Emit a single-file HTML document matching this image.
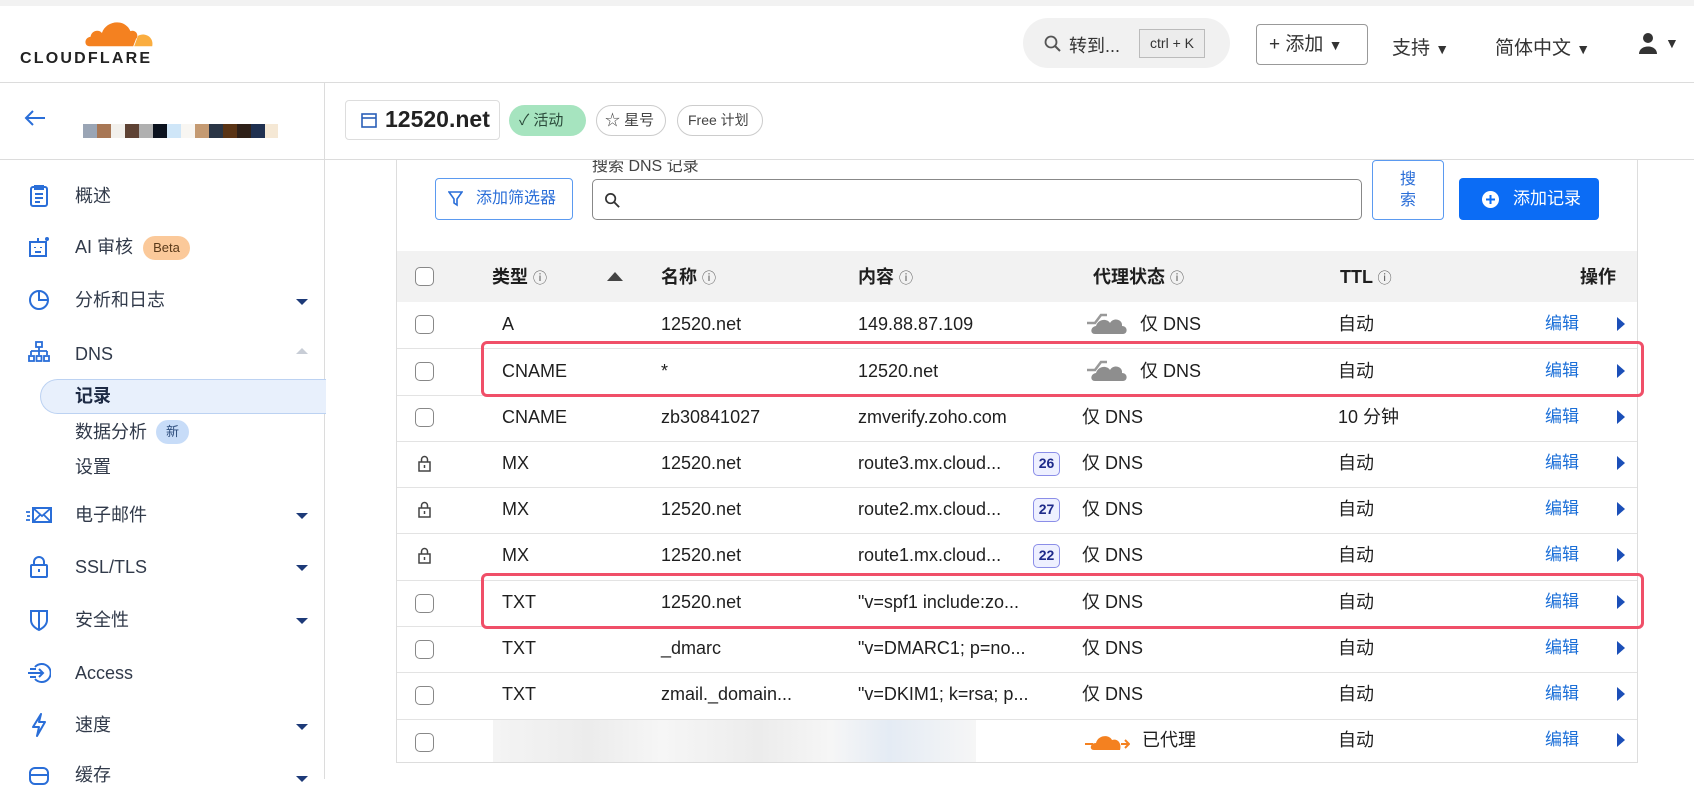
<!DOCTYPE html>
<html><head><meta charset="utf-8"><style>
*{box-sizing:border-box;margin:0;padding:0}
body{width:1694px;height:779px;overflow:hidden;background:#fff;font-family:"Liberation Sans","Noto Sans CJK SC",sans-serif;color:#222;position:relative}
.a{position:absolute;white-space:nowrap}
.t{font-size:18px;color:#1f1f1f;line-height:26px}
.nav{font-size:18px;color:#313a4a;line-height:26px}
.ic{position:absolute;left:27px;width:24px;height:24px}
.car{position:absolute;left:296px;width:0;height:0;border-left:6px solid transparent;border-right:6px solid transparent;border-top:6px solid #1d3a78}
.cb{position:absolute;left:415px;width:19px;height:19px;border:1.5px solid #888;border-radius:5px;background:#fff}
.row{position:absolute;left:397px;width:1240px;height:1px;background:#e3e3e3}
.edit{position:absolute;left:1545px;font-size:17px;color:#1b6fd8;line-height:26px}
.edit:after{content:"";position:absolute;left:72px;top:6px;border-top:7px solid transparent;border-bottom:7px solid transparent;border-left:8px solid #1b4fb8}
.badge{position:absolute;width:27px;height:24px;border:1.5px solid #8b8ee8;border-radius:5px;background:#eef0ff;color:#1e2a8a;font-size:14px;font-weight:bold;text-align:center;line-height:21px}
.red{position:absolute;left:481px;width:1163px;height:56px;border:3px solid #f04f68;border-radius:6px}
.inf{font-size:14px;color:#555;font-weight:normal}
</style></head><body>
<div class="a" style="left:0;top:0;width:1694px;height:6px;background:#f2f2f2"></div>
<div class="a" style="left:0;top:82px;width:1694px;height:1px;background:#dcdcdc"></div>
<!-- logo -->
<svg class="a" style="left:82px;top:17px" width="74" height="32" viewBox="0 0 78 32"><path d="M8 30 C2 30 2 21 9 20 C10 13 18 12 21 16 C25 3 45 0 51 14 C58 12 60 20 57 22 L54 30 Z" fill="#f48120"/><path d="M55 30 L59 19 C66 15 76 20 74 30 Z" fill="#faad3f"/></svg>
<div class="a" style="left:20px;top:50px;font-size:16px;font-weight:bold;letter-spacing:2.2px;color:#222">CLOUDFLARE</div>
<!-- search pill -->
<div class="a" style="left:1023px;top:18px;width:207px;height:50px;border-radius:25px;background:#f1f1f1"></div>
<svg class="a" style="left:1044px;top:35px" width="18" height="18" viewBox="0 0 18 18"><circle cx="7" cy="7" r="5.5" stroke="#555" stroke-width="1.8" fill="none"/><path d="M11 11 L16 16" stroke="#555" stroke-width="2"/></svg>
<div class="a" style="left:1069px;top:32px;font-size:18px;color:#333">转到...</div>
<div class="a" style="left:1139px;top:29px;width:66px;height:29px;border:1px solid #bbb;background:#ececec;font-size:14px;color:#333;text-align:center;line-height:27px">ctrl + K</div>
<div class="a" style="left:1256px;top:24px;width:112px;height:41px;border:1px solid #999;border-radius:4px;font-size:19px;color:#333;line-height:39px;padding-left:12px">+ 添加 <span style="font-size:14px">▼</span></div>
<div class="a" style="left:1392px;top:33px;font-size:19px;color:#333">支持 <span style="font-size:14px">▼</span></div>
<div class="a" style="left:1495px;top:33px;font-size:19px;color:#333">简体中文 <span style="font-size:14px">▼</span></div>
<svg class="a" style="left:1638px;top:32px" width="20" height="22" viewBox="0 0 20 22"><circle cx="10" cy="6" r="5" fill="#333"/><path d="M1 22 C1 12 19 12 19 22Z" fill="#333"/></svg>
<div class="a" style="left:1665px;top:35px;font-size:14px;color:#333">▼</div>
<!-- second row -->
<div class="a" style="left:324px;top:82px;width:1px;height:697px;background:#dcdcdc"></div>
<div class="a" style="left:0;top:159px;width:1694px;height:1px;background:#dcdcdc"></div>
<svg class="a" style="left:24px;top:109px" width="22" height="18" viewBox="0 0 22 18"><path d="M21 9 H2 M9 2 L2 9 L9 16" stroke="#2a6ed8" stroke-width="2" fill="none"/></svg>
<div class="a" style="left:83px;top:124px;height:14px;display:flex">
<i style="width:14px;background:#9aa5b5"></i><i style="width:14px;background:#a87755"></i><i style="width:14px;background:#f2f0ec"></i><i style="width:14px;background:#5e4234"></i><i style="width:14px;background:#b0b0b0"></i><i style="width:14px;background:#0b121e"></i><i style="width:14px;background:#cfe6f8"></i><i style="width:14px;background:#f8f6f2"></i><i style="width:14px;background:#c49a72"></i><i style="width:14px;background:#2a3545"></i><i style="width:14px;background:#5a3415"></i><i style="width:14px;background:#2e2018"></i><i style="width:14px;background:#1f3050"></i><i style="width:13px;background:#f5e8d5"></i></div>
<div class="a" style="left:345px;top:100px;width:155px;height:40px;border:1px solid #ddd;border-radius:4px"></div>
<svg class="a" style="left:361px;top:113px" width="16" height="15" viewBox="0 0 16 15"><rect x="1" y="1" width="14" height="13" fill="none" stroke="#2a5fb8" stroke-width="1.6"/><path d="M1 5 H15" stroke="#2a5fb8" stroke-width="1.6"/></svg>
<div class="a" style="left:385px;top:106px;font-size:23px;font-weight:bold;color:#222">12520.net</div>
<div class="a" style="left:509px;top:105px;width:77px;height:31px;border-radius:16px;background:#a6e4bf;font-size:15px;color:#2a4a3a;line-height:31px;padding-left:10px">✓ 活动</div>
<div class="a" style="left:596px;top:105px;width:70px;height:31px;border-radius:16px;border:1px solid #ccc;font-size:15px;color:#444;line-height:29px;padding-left:8px">☆ 星号</div>
<div class="a" style="left:677px;top:105px;width:86px;height:31px;border-radius:16px;border:1px solid #ccc;font-size:14px;color:#444;line-height:29px;padding-left:10px">Free 计划</div>
<!-- sidebar -->
<svg class="ic" style="top:184px" viewBox="0 0 24 24"><rect x="4" y="3" width="16" height="19" rx="2" fill="none" stroke="#2a6ed8" stroke-width="2"/><path d="M8 2 H16 V5 H8Z M8 10 H16 M8 14 H16 M8 18 H13" stroke="#2a6ed8" stroke-width="2" fill="none"/></svg>
<div class="a nav" style="left:75px;top:183px">概述</div>
<svg class="ic" style="top:235px" viewBox="0 0 24 24"><rect x="3" y="7" width="16" height="14" fill="none" stroke="#2a6ed8" stroke-width="2"/><path d="M11 7 V3 M8 12 V13 M14 12 V13 M8 17 H14" stroke="#2a6ed8" stroke-width="2"/><circle cx="20" cy="4" r="2" fill="#2a6ed8"/></svg>
<div class="a nav" style="left:75px;top:234px">AI 审核</div>
<div class="a" style="left:143px;top:236px;width:47px;height:24px;border-radius:12px;background:#fbc99a;font-size:13px;color:#5a3a1a;text-align:center;line-height:24px">Beta</div>
<svg class="ic" style="top:288px" viewBox="0 0 24 24"><circle cx="12" cy="12" r="9" fill="none" stroke="#2a6ed8" stroke-width="2"/><path d="M12 3 V12 H21" stroke="#2a6ed8" stroke-width="2" fill="none"/></svg>
<div class="a nav" style="left:75px;top:287px">分析和日志</div><div class="car" style="top:299px"></div>
<svg class="ic" style="top:340px" viewBox="0 0 24 24"><rect x="9" y="2" width="6" height="5" fill="none" stroke="#2a6ed8" stroke-width="1.8"/><path d="M12 7 V11 M4 11 H20 M4 11 V15 M12 11 V15 M20 11 V15" stroke="#2a6ed8" stroke-width="1.8" fill="none"/><rect x="2" y="16" width="5" height="5" fill="none" stroke="#2a6ed8" stroke-width="1.8"/><rect x="9.5" y="16" width="5" height="5" fill="none" stroke="#2a6ed8" stroke-width="1.8"/><rect x="17" y="16" width="5" height="5" fill="none" stroke="#2a6ed8" stroke-width="1.8"/></svg>
<div class="a nav" style="left:75px;top:341px">DNS</div>
<div class="a" style="left:296px;top:348px;border-left:6px solid transparent;border-right:6px solid transparent;border-bottom:6px solid #c8cdd6"></div>
<div class="a" style="left:40px;top:379px;width:286px;height:35px;border-radius:18px 0 0 18px;background:#e8f0fc;border:1px solid #bcd2f2;border-right:none"></div>
<div class="a" style="left:75px;top:383px;font-size:18px;font-weight:bold;color:#1d2a44;line-height:26px">记录</div>
<div class="a nav" style="left:75px;top:419px">数据分析</div>
<div class="a" style="left:156px;top:420px;width:33px;height:24px;border-radius:12px;background:#c7dcf8;font-size:13px;color:#2a4a7a;text-align:center;line-height:24px">新</div>
<div class="a nav" style="left:75px;top:454px">设置</div>
<svg class="ic" style="top:503px;left:25px;width:28px" viewBox="0 0 28 24"><rect x="8" y="5" width="18" height="14" fill="none" stroke="#2a6ed8" stroke-width="2"/><path d="M8 5 L17 13 L26 5 M8 19 L15 12 M26 19 L19 12 M1 9 H5 M2 13 H5 M1 17 H5" stroke="#2a6ed8" stroke-width="1.8" fill="none"/></svg>
<div class="a nav" style="left:75px;top:502px">电子邮件</div><div class="car" style="top:513px"></div>
<svg class="ic" style="top:555px" viewBox="0 0 24 24"><rect x="4" y="10" width="16" height="12" rx="1" fill="none" stroke="#2a6ed8" stroke-width="2"/><path d="M7 10 V7 A5 5 0 0 1 17 7 V10 M12 14 V17" stroke="#2a6ed8" stroke-width="2" fill="none"/></svg>
<div class="a nav" style="left:75px;top:554px">SSL/TLS</div><div class="car" style="top:565px"></div>
<svg class="ic" style="top:608px" viewBox="0 0 24 24"><path d="M4 3 H20 V12 C20 17 16 20 12 22 C8 20 4 17 4 12 Z M12 3 V22" stroke="#2a6ed8" stroke-width="2" fill="none"/></svg>
<div class="a nav" style="left:75px;top:607px">安全性</div><div class="car" style="top:618px"></div>
<svg class="ic" style="top:661px" viewBox="0 0 24 24"><path d="M8 6 A9 9 0 1 1 8 18" stroke="#2a6ed8" stroke-width="2" fill="none"/><path d="M1 12 H16 M12 8 L16 12 L12 16 M3 8 H9 M3 16 H9" stroke="#2a6ed8" stroke-width="2" fill="none"/></svg>
<div class="a nav" style="left:75px;top:660px">Access</div>
<svg class="ic" style="top:713px" viewBox="0 0 24 24"><path d="M14 1 L6 14 H12 L10 23 L18 9 H12 Z" stroke="#2a6ed8" stroke-width="2" fill="none" stroke-linejoin="round"/></svg>
<div class="a nav" style="left:75px;top:712px">速度</div><div class="car" style="top:724px"></div>
<svg class="ic" style="top:765px" viewBox="0 0 24 24"><rect x="3" y="3" width="18" height="16" rx="5" fill="none" stroke="#2a6ed8" stroke-width="2"/><path d="M3 10 H21" stroke="#2a6ed8" stroke-width="2"/></svg>
<div class="a nav" style="left:75px;top:762px">缓存</div><div class="car" style="top:776px"></div>
<!-- main card -->
<div class="a" style="left:396px;top:160px;width:1px;height:603px;background:#ddd"></div>
<div class="a" style="left:1637px;top:160px;width:1px;height:603px;background:#ddd"></div>
<div class="a" style="left:396px;top:762px;width:1242px;height:1px;background:#ddd"></div>
<div class="a" style="left:592px;top:152px;font-size:16px;color:#444;clip-path:inset(8px 0 0 0)">搜索 DNS 记录</div>
<div class="a" style="left:435px;top:178px;width:138px;height:42px;border:1.5px solid #5b9af0;border-radius:4px;font-size:16px;color:#2a6ed8;line-height:39px;padding-left:40px">添加筛选器</div>
<svg class="a" style="left:448px;top:191px" width="15" height="16" viewBox="0 0 15 16"><path d="M1 1 H14 L9 8 V14 L6 12 V8 Z" stroke="#2a6ed8" stroke-width="1.6" fill="none"/></svg>
<div class="a" style="left:592px;top:179px;width:770px;height:41px;border:1.5px solid #888;border-radius:5px"></div>
<svg class="a" style="left:604px;top:192px" width="17" height="17" viewBox="0 0 18 18"><circle cx="7" cy="7" r="5" stroke="#333" stroke-width="1.8" fill="none"/><path d="M11 11 L16 16" stroke="#333" stroke-width="2"/></svg>
<div class="a" style="left:1372px;top:160px;width:72px;height:60px;border:1.5px solid #5b9af0;border-radius:4px;font-size:16px;color:#2a6ed8;text-align:center;line-height:21px;padding-top:8px;white-space:normal">搜<br>索</div>
<div class="a" style="left:1459px;top:178px;width:140px;height:42px;border-radius:4px;background:#0b6cf5;font-size:17px;color:#fff;line-height:42px;padding-left:54px">添加记录</div>
<svg class="a" style="left:1482px;top:191px" width="17" height="17" viewBox="0 0 17 17"><circle cx="8.5" cy="8.5" r="8.5" fill="#fff"/><path d="M8.5 4 V13 M4 8.5 H13" stroke="#0b6cf5" stroke-width="2"/></svg>
<!-- table header -->
<div class="a" style="left:397px;top:251px;width:1240px;height:51px;background:#f2f2f2"></div>
<div class="cb" style="top:267px"></div>
<div class="a t" style="left:492px;top:264px;font-weight:bold">类型 <span class="inf">ⓘ</span></div>
<div class="a" style="left:607px;top:272px;border-left:8px solid transparent;border-right:8px solid transparent;border-bottom:9px solid #444"></div>
<div class="a t" style="left:661px;top:264px;font-weight:bold">名称 <span class="inf">ⓘ</span></div>
<div class="a t" style="left:858px;top:264px;font-weight:bold">内容 <span class="inf">ⓘ</span></div>
<div class="a t" style="left:1093px;top:264px;font-weight:bold">代理状态 <span class="inf">ⓘ</span></div>
<div class="a t" style="left:1340px;top:264px;font-weight:bold">TTL <span class="inf">ⓘ</span></div>
<div class="a t" style="left:1580px;top:264px;font-weight:bold">操作</div>
<!-- rows -->
<div class="row" style="top:348px"></div><div class="row" style="top:395px"></div><div class="row" style="top:441px"></div><div class="row" style="top:487px"></div><div class="row" style="top:533px"></div><div class="row" style="top:580px"></div><div class="row" style="top:626px"></div><div class="row" style="top:672px"></div><div class="row" style="top:719px"></div>
<!-- row1 -->
<div class="cb" style="top:315px"></div>
<div class="a t" style="left:502px;top:311px">A</div><div class="a t" style="left:661px;top:311px">12520.net</div><div class="a t" style="left:858px;top:311px">149.88.87.109</div>
<svg class="a" style="left:1087px;top:310px" width="42" height="26" viewBox="0 0 42 26"><path d="M0 13 H8 L14 5 H20" stroke="#999" stroke-width="2.5" fill="none"/><path d="M8 24 C3 24 3 17 9 16 C11 9 20 8 23 13 C26 7 36 9 35 16 C41 16 41 24 36 24Z" fill="#8e8e8e"/></svg>
<div class="a t" style="left:1140px;top:311px">仅 DNS</div><div class="a t" style="left:1338px;top:311px">自动</div><div class="edit" style="top:311px">编辑</div>
<!-- row2 -->
<div class="cb" style="top:362px"></div>
<div class="a t" style="left:502px;top:358px">CNAME</div><div class="a t" style="left:661px;top:358px">*</div><div class="a t" style="left:858px;top:358px">12520.net</div>
<svg class="a" style="left:1087px;top:357px" width="42" height="26" viewBox="0 0 42 26"><path d="M0 13 H8 L14 5 H20" stroke="#999" stroke-width="2.5" fill="none"/><path d="M8 24 C3 24 3 17 9 16 C11 9 20 8 23 13 C26 7 36 9 35 16 C41 16 41 24 36 24Z" fill="#8e8e8e"/></svg>
<div class="a t" style="left:1140px;top:358px">仅 DNS</div><div class="a t" style="left:1338px;top:358px">自动</div><div class="edit" style="top:358px">编辑</div>
<!-- row3 -->
<div class="cb" style="top:408px"></div>
<div class="a t" style="left:502px;top:404px">CNAME</div><div class="a t" style="left:661px;top:404px">zb30841027</div><div class="a t" style="left:858px;top:404px">zmverify.zoho.com</div>
<div class="a t" style="left:1082px;top:404px">仅 DNS</div><div class="a t" style="left:1338px;top:404px">10 分钟</div><div class="edit" style="top:404px">编辑</div>
<!-- MX -->
<svg class="a" style="left:418px;top:455px" width="13" height="17" viewBox="0 0 13 17"><rect x="1" y="7" width="11" height="9" fill="none" stroke="#444" stroke-width="1.5"/><path d="M3.5 7 V4.5 A3 3 0 0 1 9.5 4.5 V7 M6.5 10 V13" stroke="#444" stroke-width="1.5" fill="none"/></svg>
<div class="a t" style="left:502px;top:450px">MX</div><div class="a t" style="left:661px;top:450px">12520.net</div><div class="a t" style="left:858px;top:450px">route3.mx.cloud...</div><div class="badge" style="left:1033px;top:452px">26</div>
<div class="a t" style="left:1082px;top:450px">仅 DNS</div><div class="a t" style="left:1338px;top:450px">自动</div><div class="edit" style="top:450px">编辑</div>
<svg class="a" style="left:418px;top:501px" width="13" height="17" viewBox="0 0 13 17"><rect x="1" y="7" width="11" height="9" fill="none" stroke="#444" stroke-width="1.5"/><path d="M3.5 7 V4.5 A3 3 0 0 1 9.5 4.5 V7 M6.5 10 V13" stroke="#444" stroke-width="1.5" fill="none"/></svg>
<div class="a t" style="left:502px;top:496px">MX</div><div class="a t" style="left:661px;top:496px">12520.net</div><div class="a t" style="left:858px;top:496px">route2.mx.cloud...</div><div class="badge" style="left:1033px;top:498px">27</div>
<div class="a t" style="left:1082px;top:496px">仅 DNS</div><div class="a t" style="left:1338px;top:496px">自动</div><div class="edit" style="top:496px">编辑</div>
<svg class="a" style="left:418px;top:547px" width="13" height="17" viewBox="0 0 13 17"><rect x="1" y="7" width="11" height="9" fill="none" stroke="#444" stroke-width="1.5"/><path d="M3.5 7 V4.5 A3 3 0 0 1 9.5 4.5 V7 M6.5 10 V13" stroke="#444" stroke-width="1.5" fill="none"/></svg>
<div class="a t" style="left:502px;top:542px">MX</div><div class="a t" style="left:661px;top:542px">12520.net</div><div class="a t" style="left:858px;top:542px">route1.mx.cloud...</div><div class="badge" style="left:1033px;top:544px">22</div>
<div class="a t" style="left:1082px;top:542px">仅 DNS</div><div class="a t" style="left:1338px;top:542px">自动</div><div class="edit" style="top:542px">编辑</div>
<!-- TXT rows -->
<div class="cb" style="top:594px"></div>
<div class="a t" style="left:502px;top:589px">TXT</div><div class="a t" style="left:661px;top:589px">12520.net</div><div class="a t" style="left:858px;top:589px">"v=spf1 include:zo...</div>
<div class="a t" style="left:1082px;top:589px">仅 DNS</div><div class="a t" style="left:1338px;top:589px">自动</div><div class="edit" style="top:589px">编辑</div>
<div class="cb" style="top:640px"></div>
<div class="a t" style="left:502px;top:635px">TXT</div><div class="a t" style="left:661px;top:635px">_dmarc</div><div class="a t" style="left:858px;top:635px">"v=DMARC1; p=no...</div>
<div class="a t" style="left:1082px;top:635px">仅 DNS</div><div class="a t" style="left:1338px;top:635px">自动</div><div class="edit" style="top:635px">编辑</div>
<div class="cb" style="top:686px"></div>
<div class="a t" style="left:502px;top:681px">TXT</div><div class="a t" style="left:661px;top:681px">zmail._domain...</div><div class="a t" style="left:858px;top:681px">"v=DKIM1; k=rsa; p...</div>
<div class="a t" style="left:1082px;top:681px">仅 DNS</div><div class="a t" style="left:1338px;top:681px">自动</div><div class="edit" style="top:681px">编辑</div>
<!-- last row blurred -->
<div class="cb" style="top:733px"></div>
<div class="a" style="left:493px;top:720px;width:483px;height:42px;background:linear-gradient(90deg,#f4f4f4,#ececec 20%,#f6f6f6 35%,#ececec 55%,#f6f6f6 70%,#e4ebf4 82%,#f6f6f6)"></div>
<svg class="a" style="left:1085px;top:730px" width="45" height="22" viewBox="0 0 45 22"><path d="M0 14 H8 M36 14 H44 M40 10 L44 14 L40 18" stroke="#f48120" stroke-width="2" fill="none"/><path d="M9 20 C4 20 5 13 11 13 C13 5 24 4 27 10 C33 8 37 14 35 20Z" fill="#f48120"/></svg>
<div class="a t" style="left:1142px;top:727px">已代理</div><div class="a t" style="left:1338px;top:727px">自动</div><div class="edit" style="top:727px">编辑</div>
<!-- highlight boxes -->
<div class="red" style="top:341px"></div>
<div class="red" style="top:573px"></div>
</body></html>
